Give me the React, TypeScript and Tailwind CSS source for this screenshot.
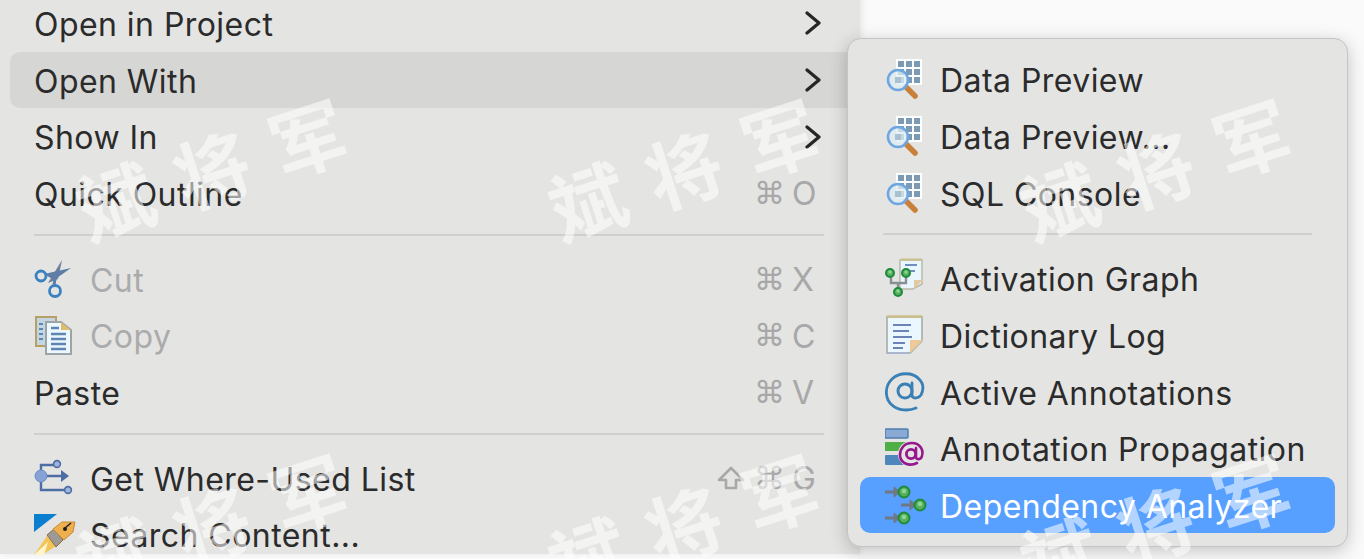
import React from "react";

const font = { fontFamily: '"Inter", "DejaVu Sans", sans-serif' };

const DataIcon = () => (
  <svg width="40" height="40" viewBox="0 0 40 40" className="shrink-0">
    <rect x="11" y="0" width="26" height="26" fill="#fdfeff" />
    {[2, 10, 18].map((y) =>
      [13, 21, 29].map((x) => (
        <rect key={`${x}-${y}`} x={x} y={y} width="6" height="6" fill="#7c9ab3" />
      ))
    )}
    <path d="M21 28 L30 37" stroke="#c9803a" strokeWidth="5.5" strokeLinecap="round" />
    <circle cx="13" cy="21" r="10" fill="#dfeef3" fillOpacity="0.75" stroke="#6ea6e2" strokeWidth="2.6" />
    <rect x="10" y="18" width="6" height="6" fill="#a9c0d0" />
  </svg>
);

const GreenDot = ({ cx, cy, r = 5 }: { cx: number; cy: number; r?: number }) => (
  <g>
    <circle cx={cx} cy={cy} r={r} fill="#56b05c" stroke="#1f8a3c" strokeWidth="2" />
    <circle cx={cx} cy={cy - 1} r={r / 2.4} fill="#8fd596" />
  </g>
);

const ActivationIcon = () => (
  <svg width="40" height="40" viewBox="0 0 40 40" className="shrink-0">
    <path d="M15 2 H37 V26 L28 31 H15 Z" fill="#eaf6fd" stroke="#b9b9a8" strokeWidth="1.5" />
    <path d="M16 1.5 H37" stroke="#cdbf8a" strokeWidth="2" />
    <path d="M29 31 L38 22 H29 Z" fill="#e3c8a4" />
    <path d="M20 7 H32 M20 13 H30" stroke="#6f8fbf" strokeWidth="2" />
    <path d="M6 18 V25 H21 V18 M13 25 V34" stroke="#8a8f94" strokeWidth="2.4" fill="none" />
    <GreenDot cx={5} cy={15} r={4} />
    <GreenDot cx={21} cy={15} r={4} />
    <GreenDot cx={13} cy={34} r={4} />
  </svg>
);

const DictionaryIcon = () => (
  <svg width="40" height="40" viewBox="0 0 40 40" className="shrink-0">
    <path d="M2 2 H37 V26 L25 38 H2 Z" fill="#eaf7fe" stroke="#aeb3ad" strokeWidth="1.8" />
    <path d="M2 1.5 H37" stroke="#cdbf8a" strokeWidth="2.4" />
    <path d="M2 38 H25" stroke="#a9b6cc" strokeWidth="2" />
    <path d="M25 38 L38 25 H25 Z" fill="#eec898" />
    <path d="M8 10 H26 M8 16 H24 M8 22 H27 M8 28 H20 M8 33 H18" stroke="#6d82b5" strokeWidth="2.2" />
  </svg>
);

const AtIcon = () => (
  <svg width="40" height="40" viewBox="0 0 40 40" className="shrink-0">
    <circle cx="20" cy="19" r="7" fill="none" stroke="#3a80b4" strokeWidth="3" />
    <path
      d="M27 11 V23 C27 27 33 27 36 23 C39 17 38 11 34 7 C28 0 14 0 7 7 C-1 15 0 27 7 33 C13 39 24 39 31 36"
      fill="none"
      stroke="#3a80b4"
      strokeWidth="2.8"
      strokeLinecap="round"
    />
  </svg>
);

const PropagationIcon = () => (
  <svg width="40" height="40" viewBox="0 0 40 40" className="shrink-0">
    <rect x="0" y="1" width="23" height="9" rx="1" fill="#8aa9d4" stroke="#4f7fb0" strokeWidth="1.5" />
    <rect x="0" y="14" width="26" height="9" fill="#4fae45" />
    <rect x="0" y="27" width="22" height="10" rx="1" fill="#4f87bd" />
    <circle cx="26" cy="26" r="13" fill="#e4e4e3" />
    <circle cx="26" cy="26" r="4.6" fill="none" stroke="#97178c" strokeWidth="2.8" />
    <path
      d="M31 20 V29 C31 32 36 32 37 28 C39 21 34 15 27 15 C19 15 15 21 15 27 C15 35 24 39 32 35"
      fill="none"
      stroke="#97178c"
      strokeWidth="2.6"
      strokeLinecap="round"
    />
  </svg>
);

const DependencyIcon = () => (
  <svg width="42" height="40" viewBox="0 0 42 40" className="shrink-0">
    <g stroke="#6f7883" strokeWidth="3" fill="#6f7883">
      <path d="M0 7 H12" />
      <path d="M9 2 L15 7 L9 12 Z" strokeWidth="1" />
      <path d="M16 20 H28" />
      <path d="M25 15 L31 20 L25 25 Z" strokeWidth="1" />
      <path d="M0 33 H12" />
      <path d="M9 28 L15 33 L9 38 Z" strokeWidth="1" />
    </g>
    <GreenDot cx={19} cy={7} r={5.5} />
    <GreenDot cx={35} cy={20} r={5.5} />
    <GreenDot cx={19} cy={33} r={5.5} />
  </svg>
);

const ScissorsIcon = () => (
  <svg width="40" height="40" viewBox="0 0 40 40" className="shrink-0">
    <path d="M14 24 L28 1 L24 20 Z" fill="#6f7f9c" />
    <path d="M10 15 L37 9 L20 21 Z" fill="#5f7da6" />
    <circle cx="7" cy="17" r="5" fill="none" stroke="#3b82c0" strokeWidth="2.8" />
    <circle cx="21" cy="32" r="5.5" fill="none" stroke="#3b82c0" strokeWidth="2.8" />
    <path d="M20 26 L21 20" stroke="#5f7da6" strokeWidth="3" />
  </svg>
);

const CopyIcon = () => (
  <svg width="40" height="40" viewBox="0 0 40 40" className="shrink-0">
    <path d="M2 1 H22 V30 H2 Z" fill="#c3d6e2" stroke="#b79f68" strokeWidth="2" />
    <path d="M5 8 H9 M5 13 H9 M5 18 H9 M5 23 H9" stroke="#5d86b2" strokeWidth="2" />
    <path d="M12 6 H27 L37 14 V38 H12 Z" fill="#eef7fc" stroke="#9ba4a6" strokeWidth="2" />
    <path d="M27 6 V14 H37 Z" fill="#dcbd6d" />
    <path d="M17 12 H25 M17 18 H32 M17 23 H32 M17 28 H32 M17 33 H32" stroke="#5d86b2" strokeWidth="2.4" />
  </svg>
);

const WhereUsedIcon = () => (
  <svg width="40" height="40" viewBox="0 0 40 40" className="shrink-0">
    <path d="M7 16 V7 H22 M7 21 V32 H32 M10 18 H28" fill="none" stroke="#4c6ea3" strokeWidth="2.4" />
    <path d="M27 12 L35 18 L27 24 Z" fill="#4c6ea3" />
    <circle cx="7" cy="18" r="6" fill="#87a3d6" stroke="#6d8cc4" strokeWidth="1" />
    <circle cx="23" cy="6" r="3.4" fill="#9db4dd" stroke="#4c6ea3" strokeWidth="1.6" />
    <circle cx="34" cy="32" r="3.4" fill="#9db4dd" stroke="#4c6ea3" strokeWidth="1.6" />
  </svg>
);

const SearchContentIcon = () => (
  <svg width="42" height="42" viewBox="0 0 42 42" className="shrink-0">
    <path d="M0 0 H23 L0 18 Z" fill="#0a7fd0" />
    <path d="M0 41 L13 22 L22 32 L8 41 Z" fill="#f3c558" />
    <path d="M0 41 L14 28 L10 41 Z" fill="#fff6d0" />
    <path d="M13 21 L20 15 L29 26 L22 33 Z" fill="#9c9a92" stroke="#8a6f45" strokeWidth="1" />
    <path d="M19 15 L28 8 L41 8 L39 18 L30 26 Z" fill="#eeb04e" stroke="#c98a34" strokeWidth="1" />
    <circle cx="31" cy="15" r="2" fill="#1d1d1d" />
    <path d="M31 14 L37 9" stroke="#1d1d1d" strokeWidth="1.5" />
  </svg>
);

const Chevron = () => (
  <svg width="16" height="24" viewBox="0 0 16 24" className="shrink-0">
    <path d="M2 2 L14 12 L2 22" fill="none" stroke="#262626" strokeWidth="3.2" strokeLinecap="round" strokeLinejoin="round" />
  </svg>
);

const ShiftIcon = () => (
  <svg width="28" height="24" viewBox="0 0 28 24" className="shrink-0 mr-[9px]">
    <path d="M14 2 L26 14 H19 V22 H9 V14 H2 Z" fill="none" stroke="#a8a8a8" strokeWidth="2.6" strokeLinejoin="round" />
  </svg>
);

const Shortcut = ({ letter, shift }: { letter: string; shift?: boolean }) => (
  <div className="flex items-center text-[32px] tracking-normal text-[#a8a8a8]">
    {shift && <ShiftIcon />}
    <span className="w-[38px] text-[31px]" style={{ fontFamily: '"DejaVu Sans", sans-serif' }}>⌘</span>
    <span className="mt-[2px] w-[24px]">{letter}</span>
  </div>
);

type RowProps = {
  label: string;
  icon?: React.ReactNode;
  disabled?: boolean;
  arrow?: boolean;
  shortcut?: React.ReactNode;
  active?: boolean;
};

const MainRow = ({ label, icon, disabled, arrow, shortcut, active }: RowProps) => (
  <div
    className={`flex h-[56.7px] items-center pl-[24px] pr-[8px] rounded-[10px] ${active ? "bg-[#d6d6d5]" : ""}`}
  >
    {icon && <div className="w-[56px]">{icon}</div>}
    <span className={`mt-[3px] ${disabled ? "text-[#ababab]" : "text-[#2b2b2b]"}`}>{label}</span>
    <div className={`ml-auto flex items-center ${arrow ? "pr-[31px]" : "pr-[36px]"}`}>
      {arrow && <Chevron />}
      {shortcut}
    </div>
  </div>
);

const SubRow = ({ label, icon, active }: RowProps) => (
  <div
    className={`flex items-center pl-[25px] rounded-[10px] ${active ? "h-[56px] bg-[#57a0ff] text-white" : "h-[56.7px] text-[#2b2b2b]"}`}
  >
    <div className="w-[55px]">{icon}</div>
    <span className="mt-[4px]">{label}</span>
  </div>
);

const Separator = () => <div className="mt-[12px] mb-[15px] h-[2px] bg-[#cfcfce]" />;

// one stamp of the repeated watermark, placed at its own spot on the page
const Mark = ({ x, y }: { x: number; y: number }) => (
  <div
    className="absolute flex w-[278px] -rotate-[18deg] justify-between text-[76px] leading-none font-bold tracking-normal text-white/55"
    style={{ left: x, top: y, fontFamily: '"Noto Sans CJK SC", sans-serif' }}
  >
    <span>斌</span>
    <span>将</span>
    <span>军</span>
  </div>
);

export default function App() {
  return (
    <div
      className="relative h-[559px] w-[1364px] overflow-hidden bg-[#fafafa] text-[32px] leading-none tracking-[0.45px]"
      style={font}
    >
      <div className="h-full w-[860px] bg-[#e4e4e3] pl-[10px] shadow-[2px_0_6px_rgba(0,0,0,0.08)]">
        <div className="-mt-[5px]">
          <MainRow label="Open in Project" arrow />
          <MainRow label="Open With" arrow active />
          <MainRow label="Show In" arrow />
          <MainRow label="Quick Outline" shortcut={<Shortcut letter="O" />} />
          <div className="ml-[24px] mr-[36px]">
            <Separator />
          </div>
          <MainRow label="Cut" icon={<ScissorsIcon />} disabled shortcut={<Shortcut letter="X" />} />
          <MainRow label="Copy" icon={<CopyIcon />} disabled shortcut={<Shortcut letter="C" />} />
          <MainRow label="Paste" shortcut={<Shortcut letter="V" />} />
          <div className="ml-[24px] mr-[36px]">
            <Separator />
          </div>
          <MainRow label="Get Where-Used List" icon={<WhereUsedIcon />} shortcut={<Shortcut letter="G" shift />} />
          <MainRow label="Search Content..." icon={<SearchContentIcon />} />
        </div>
      </div>

      {/* submenu flies out over the main menu */}
      <div className="absolute left-[847px] top-[38px] h-[509px] w-[501px] rounded-[14px] border border-[#c4c4c3] bg-[#e4e4e3] px-[12px] pt-[12px] shadow-[0_4px_18px_rgba(0,0,0,0.22)]">
        <SubRow label="Data Preview" icon={<DataIcon />} />
        <SubRow label="Data Preview..." icon={<DataIcon />} />
        <SubRow label="SQL Console" icon={<DataIcon />} />
        <div className="mx-[23px] mt-[1px]">
          <Separator />
        </div>
        <SubRow label="Activation Graph" icon={<ActivationIcon />} />
        <SubRow label="Dictionary Log" icon={<DictionaryIcon />} />
        <SubRow label="Active Annotations" icon={<AtIcon />} />
        <SubRow label="Annotation Propagation" icon={<PropagationIcon />} />
        <SubRow label="Dependency Analyzer" icon={<DependencyIcon />} active />
      </div>

      <div className="pointer-events-none absolute inset-0">
        <Mark x={72} y={129} />
        <Mark x={544} y={129} />
        <Mark x={1016} y={129} />
        <Mark x={72} y={484} />
        <Mark x={544} y={484} />
        <Mark x={1016} y={484} />
      </div>
    </div>
  );
}
